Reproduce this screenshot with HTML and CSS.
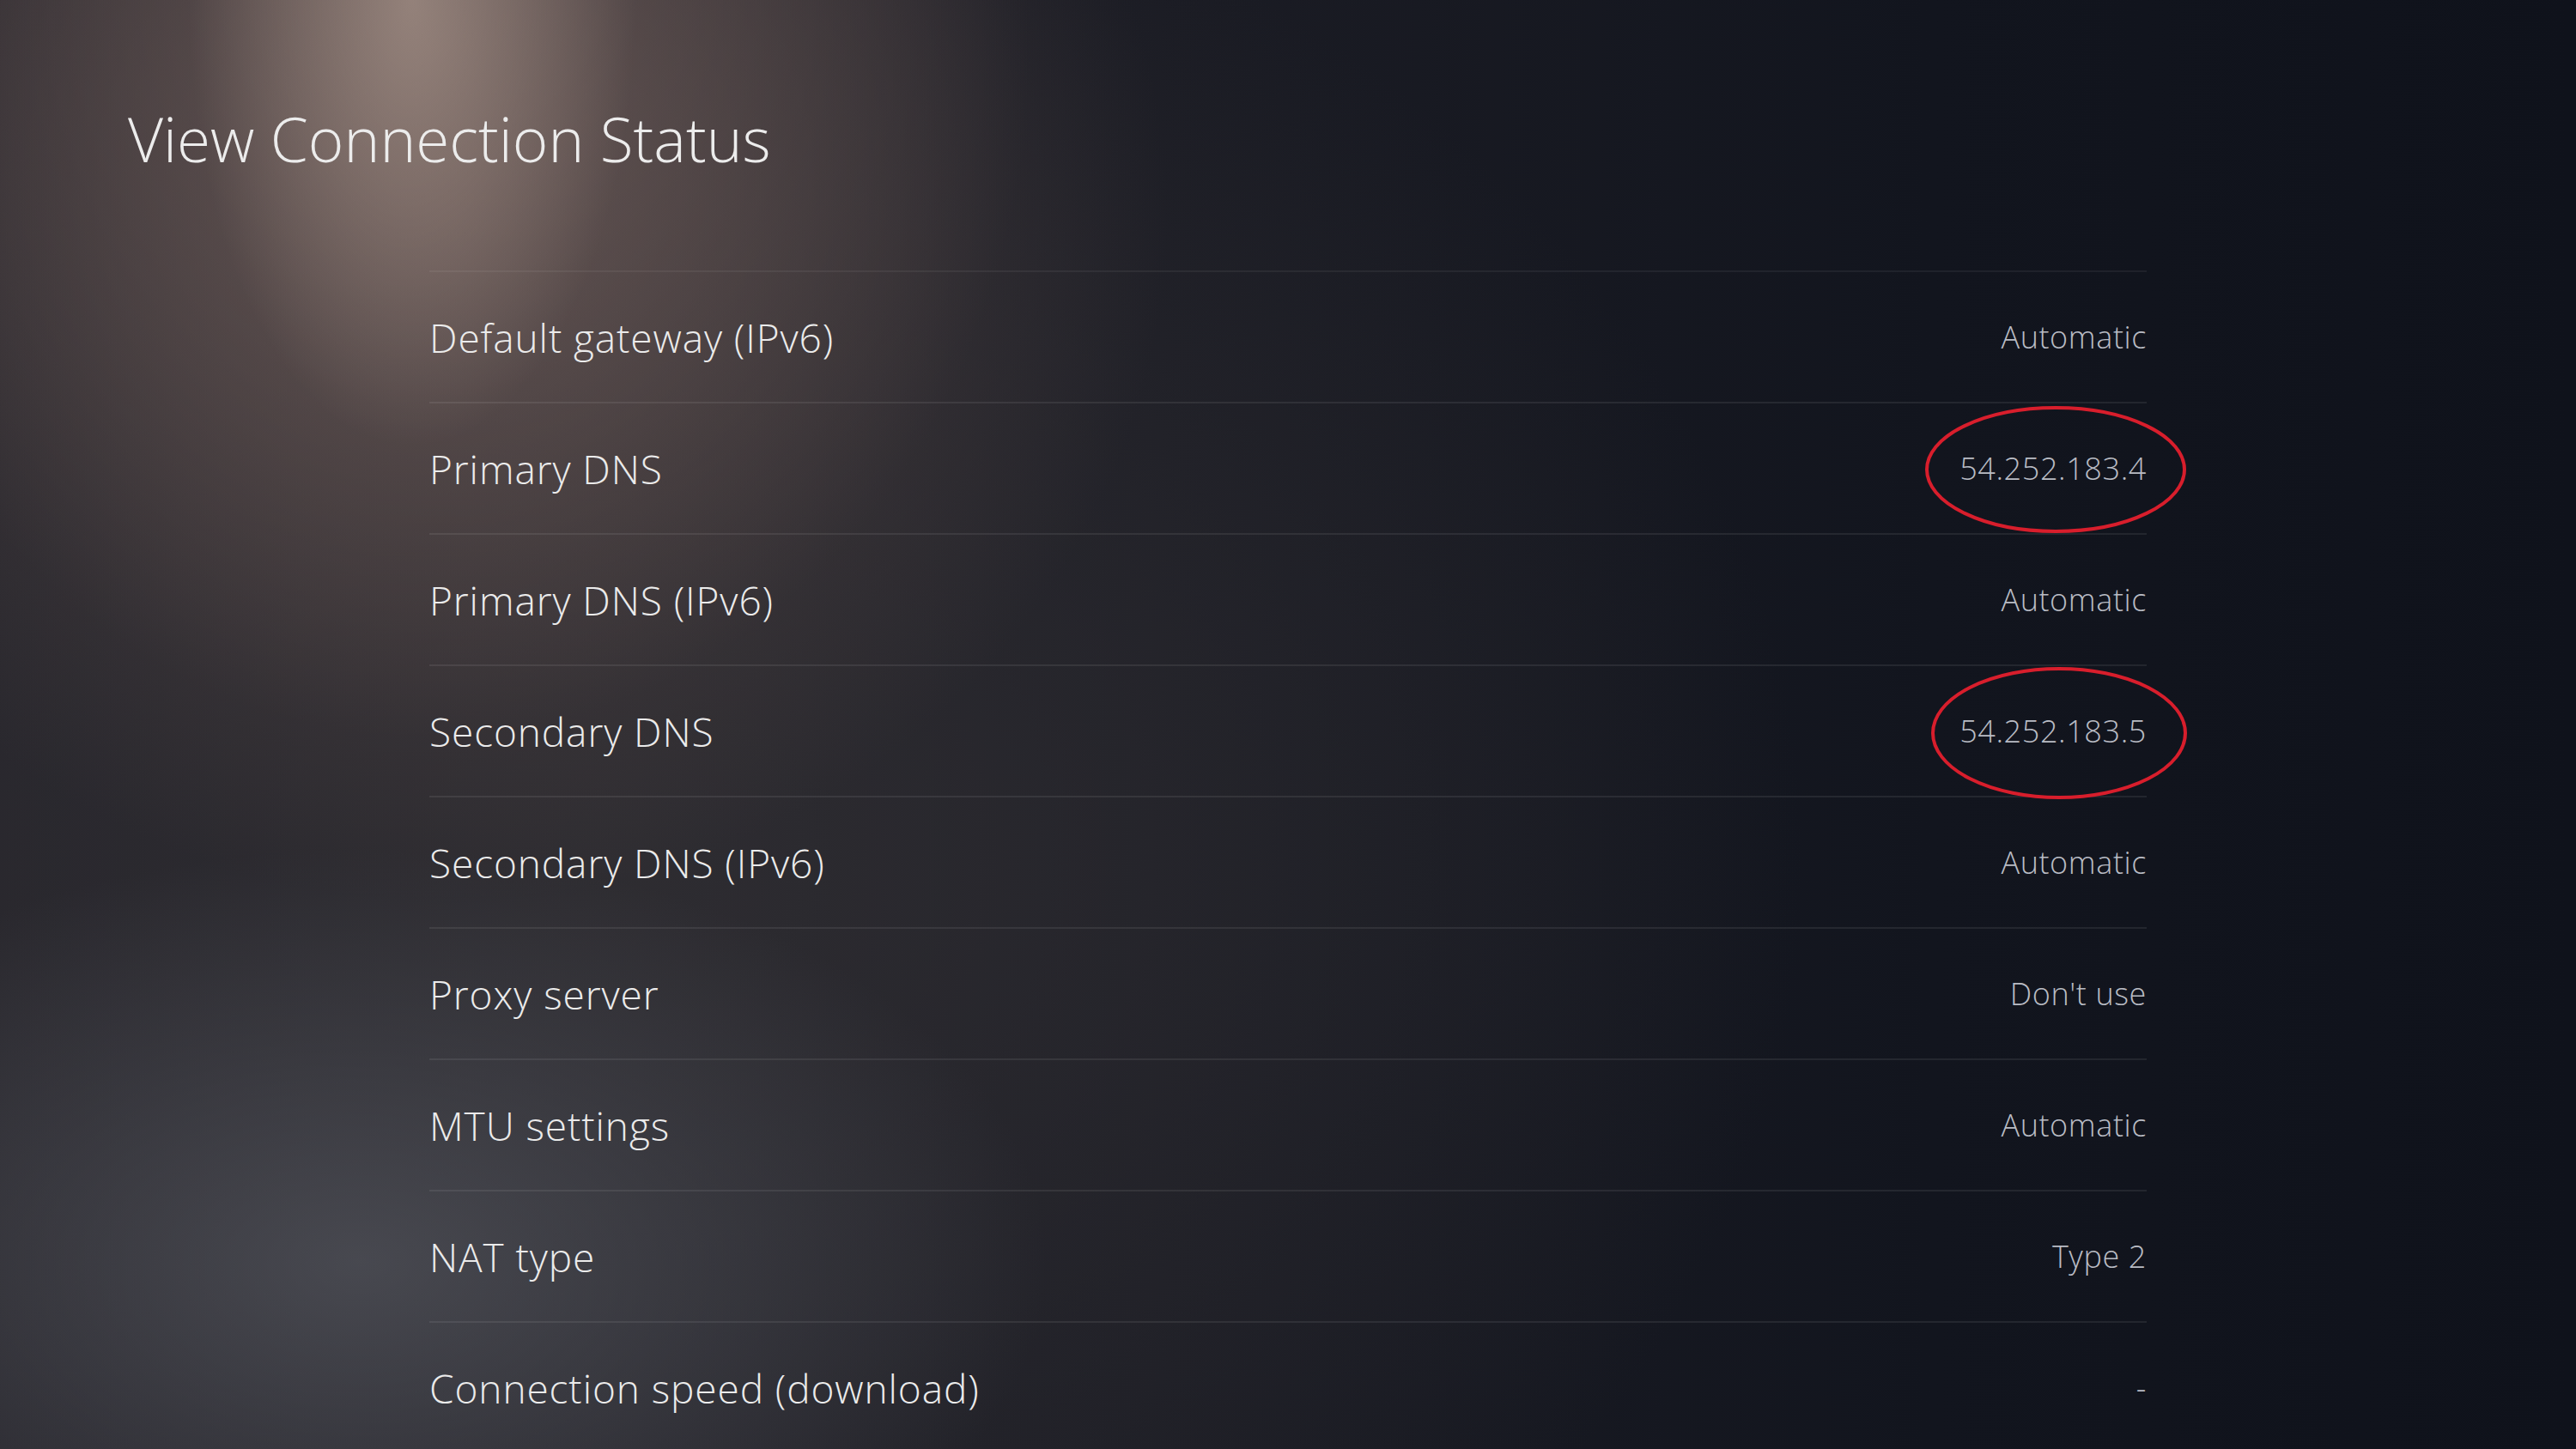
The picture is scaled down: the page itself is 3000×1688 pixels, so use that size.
FILE: index.html
```html
<!DOCTYPE html>
<html lang="en">
<head>
<meta charset="utf-8">
<title>View Connection Status</title>
<link rel="stylesheet" href="styles.css">
</head>
<body>
<div class="screen">
  <h1 class="title">View Connection Status</h1>
  <div class="list">
    <div class="row"><span class="label">Default gateway (IPv6)</span><span class="value">Automatic</span></div>
    <div class="row"><span class="label">Primary DNS</span><span class="value">54.252.183.4</span>
      <svg class="mark mark-a" viewBox="0 0 304 150"><ellipse cx="152" cy="75" rx="150" ry="72"/></svg></div>
    <div class="row"><span class="label">Primary DNS (IPv6)</span><span class="value">Automatic</span></div>
    <div class="row"><span class="label">Secondary DNS</span><span class="value">54.252.183.5</span>
      <svg class="mark mark-b" viewBox="0 0 298 156"><ellipse cx="149" cy="78" rx="147" ry="75"/></svg></div>
    <div class="row"><span class="label">Secondary DNS (IPv6)</span><span class="value">Automatic</span></div>
    <div class="row"><span class="label">Proxy server</span><span class="value">Don't use</span></div>
    <div class="row"><span class="label">MTU settings</span><span class="value">Automatic</span></div>
    <div class="row"><span class="label">NAT type</span><span class="value">Type 2</span></div>
    <div class="row"><span class="label">Connection speed (download)</span><span class="value">-</span></div>
  </div>
</div>
</body>
</html>
```
FILE: styles.css
```css
html, body {
  margin: 0;
  padding: 0;
}
body {
  width: 3000px;
  height: 1688px;
  overflow: hidden;
  background: #12151e;
  font-family: "Open Sans", "Noto Sans", sans-serif;
  font-weight: 300;
}
.screen {
  width: 3000px;
  height: 1688px;
  box-sizing: border-box;
  padding: 114px 0 0 0;
  background:
    radial-gradient(ellipse 260px 520px at 480px 0px, rgba(170,150,140,0.7), rgba(170,150,140,0) 100%),
    radial-gradient(ellipse 700px 800px at 500px 60px, rgba(125,105,100,0.55), rgba(125,105,100,0) 100%),
    radial-gradient(ellipse 1050px 1000px at 520px 250px, rgba(95,80,78,0.7), rgba(95,80,78,0) 80%),
    radial-gradient(ellipse 800px 480px at 420px 1470px, rgba(88,90,98,0.65), rgba(88,90,98,0) 100%),
    radial-gradient(ellipse 1400px 1200px at 700px 1000px, rgba(50,48,52,0.8), rgba(50,48,52,0) 100%),
    linear-gradient(90deg, #24232a 0%, #1b1c24 45%, #12151e 75%, #0f121b 100%);
}
.title {
  margin: 0 0 0 149px;
  font-weight: 300;
  font-size: 71px;
  line-height: 96px;
  color: #ececec;
}
.list {
  margin: 105px 0 0 500px;
  width: 2000px;
  border-top: 2px solid rgba(255,255,255,0.06);
}
.row {
  position: relative;
  display: flex;
  align-items: center;
  justify-content: space-between;
  height: 151px;
  border-bottom: 2px solid rgba(255,255,255,0.08);
}
.label {
  font-size: 46px;
  letter-spacing: 0.9px;
  color: #ebebeb;
}
.value {
  font-size: 36px;
  letter-spacing: 0.6px;
  color: #b9bcc4;
}
.mark {
  position: absolute;
  fill: none;
  stroke: #d81e2c;
  stroke-width: 4;
}
.mark-a {
  right: -46px;
  top: 2px;
  width: 304px;
  height: 150px;
}
.mark-b {
  right: -47px;
  top: 0px;
  width: 298px;
  height: 156px;
}
```
